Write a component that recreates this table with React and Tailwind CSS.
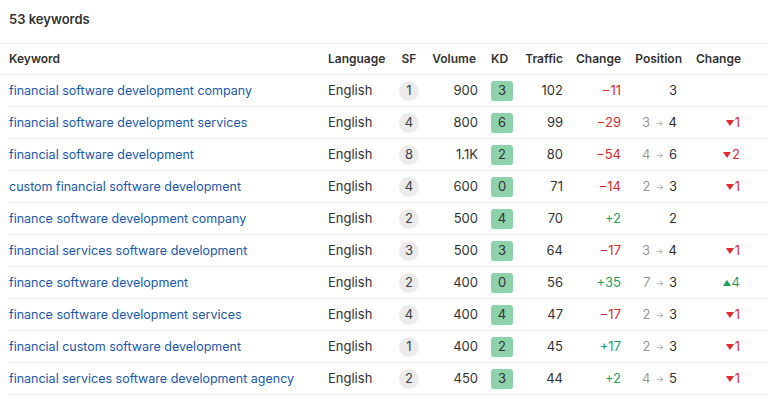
import React from "react";

const rows = [
  ["financial software development company", 1, "900", 3, 102, -11, null, 3, null],
  ["financial software development services", 4, "800", 6, 99, -29, 3, 4, -1],
  ["financial software development", 8, "1.1K", 2, 80, -54, 4, 6, -2],
  ["custom financial software development", 4, "600", 0, 71, -14, 2, 3, -1],
  ["finance software development company", 2, "500", 4, 70, 2, null, 2, null],
  ["financial services software development", 3, "500", 3, 64, -17, 3, 4, -1],
  ["finance software development", 2, "400", 0, 56, 35, 7, 3, 4],
  ["finance software development services", 4, "400", 4, 47, -17, 2, 3, -1],
  ["financial custom software development", 1, "400", 2, 45, 17, 2, 3, -1],
  ["financial services software development agency", 2, "450", 3, 44, 2, 4, 5, -1],
];

function Tri({ up }) {
  return (
    <svg width="8" height="6" viewBox="0 0 8 6" className="mr-[1px]">
      {up ? <path d="M4 0 L8 6 L0 6 Z" fill="currentColor" /> : <path d="M0 0 L8 0 L4 6 Z" fill="currentColor" />}
    </svg>
  );
}

export default function App() {
  return (
    <div className="w-[768px] h-[398px] bg-white text-[#333] overflow-hidden" style={{ fontFamily: "Inter, 'Noto Sans', sans-serif" }}>
      <div className="h-[43px] pl-[9px] pt-[10px]">
        <div className="text-[13px] leading-[18px] font-semibold text-[#333]">53 keywords</div>
      </div>
      <div className="flex h-[32px] border-y border-[#ececec] items-center text-[12px] font-semibold text-[#333]">
        <div className="w-[328px] pl-[9px]">Keyword</div>
        <div className="w-[62px]">Language</div>
        <div className="w-[38px] text-center">SF</div>
        <div className="w-[48px] text-right">Volume</div>
        <div className="w-[42px] pl-[15px]">KD</div>
        <div className="w-[45px] text-right">Traffic</div>
        <div className="w-[58px] text-right">Change</div>
        <div className="w-[61px] text-right">Position</div>
        <div className="w-[59px] text-right">Change</div>
      </div>
      <div className="ml-[9px]">
        {rows.map((r, i) => {
          const [kw, sf, vol, kd, tr, ch, from, to, pch] = r;
          return (
            <div key={i} className="flex h-[32px] border-b border-[#ececec] items-center text-[13px]">
              <div className="w-[319px] text-[#2058ab] text-[12.5px] leading-[18px] pt-[1px] whitespace-nowrap">{kw}</div>
              <div className="w-[62px]">English</div>
              <div className="w-[38px] flex justify-center">
                <span className="w-[20px] h-[20px] rounded-full bg-[#ebebeb] flex items-center justify-center text-[13px] text-[#444]">{sf}</span>
              </div>
              <div className="w-[50px] text-right">{vol}</div>
              <div className="w-[42px] pl-[13px]">
                <span className="w-[22px] h-[20px] rounded-[3px] bg-[#8dd2ab] flex items-center justify-center text-[#333]">{kd}</span>
              </div>
              <div className="w-[43px] text-right">{tr}</div>
              <div className={"w-[58px] text-right " + (ch < 0 ? "text-[#e0282e]" : "text-[#1d9f5f]")}>
                {ch < 0 ? "\u2212" + Math.abs(ch) : "+" + ch}
              </div>
              <div className="w-[56px] flex justify-end items-center">
                {from !== null && (
                  <>
                    <span className="text-[#999]">{from}</span>
                    <span className="text-[#b0b0b0] text-[9px] mx-[5px]">→</span>
                  </>
                )}
                <span>{to}</span>
              </div>
              <div className="w-[63px] flex justify-end items-center">
                {pch !== null && (
                  <span className={"flex items-center " + (pch < 0 ? "text-[#e0282e]" : "text-[#1d9f5f]")}>
                    <Tri up={pch > 0} />
                    {Math.abs(pch)}
                  </span>
                )}
              </div>
            </div>
          );
        })}
      </div>
    </div>
  );
}
